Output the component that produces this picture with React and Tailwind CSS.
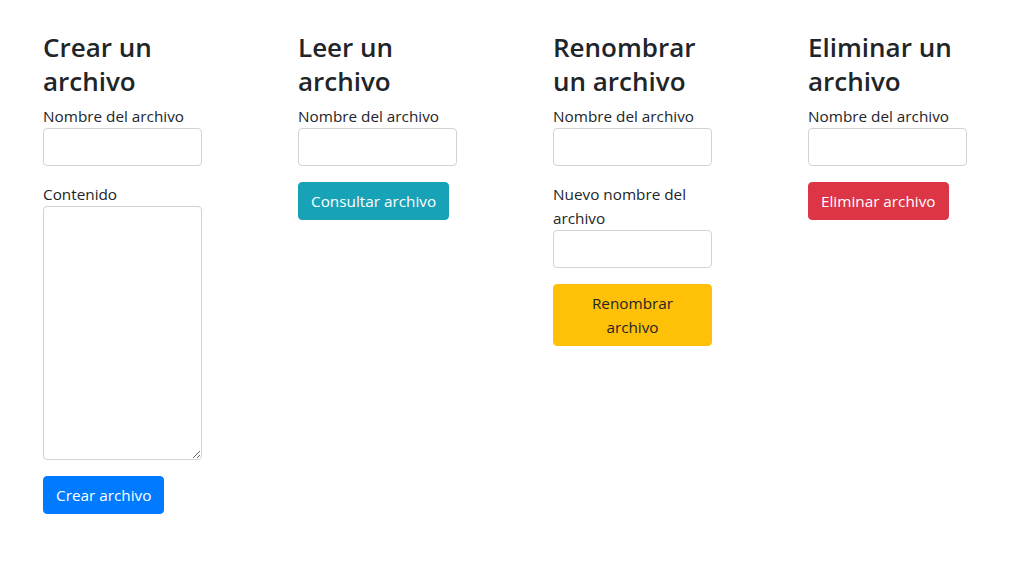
import React from "react";

const font = { fontFamily: '"Open Sans", "Noto Sans", sans-serif' };

const inputCls =
  "block w-full h-[38px] px-3 py-1.5 text-[15.3px] text-[#495057] bg-white border border-[#ced4da] rounded outline-none";
const labelCls = "block text-[15.3px] leading-6 text-[#212529]";
const headCls = "text-[26px] leading-[33.6px] font-semibold text-[#212529] pt-[2px] mb-[6px]";
const btnCls = "px-3 py-1.5 text-[15.3px] leading-6 rounded border";

function Field({ label, children }) {
  return (
    <div className="mb-4">
      <label className={labelCls}>{label}</label>
      {children}
    </div>
  );
}

export default function App() {
  return (
    <div className="bg-white min-h-[568px] pl-[43px] pt-[29px] flex" style={font}>
      {/* Crear */}
      <div className="w-[255px] shrink-0">
        <div className="w-[159px]">
          <h3 className={headCls}>Crear un archivo</h3>
          <Field label="Nombre del archivo">
            <input type="text" className={inputCls} />
          </Field>
          <Field label="Contenido">
            <textarea rows={10} className="block w-full h-[254px] px-3 py-1.5 text-base text-[#495057] bg-white border border-[#ced4da] rounded outline-none" />
          </Field>
          <button className={`${btnCls} text-white bg-[#007bff] border-[#007bff]`}>Crear archivo</button>
        </div>
      </div>

      {/* Leer */}
      <div className="w-[255px] shrink-0">
        <div className="w-[159px]">
          <h3 className={headCls}>Leer un archivo</h3>
          <Field label="Nombre del archivo">
            <input type="text" className={inputCls} />
          </Field>
          <button className={`${btnCls} text-white bg-[#17a2b8] border-[#17a2b8]`}>Consultar archivo</button>
        </div>
      </div>

      {/* Renombrar */}
      <div className="w-[255px] shrink-0">
        <div className="w-[159px]">
          <h3 className={headCls}>Renombrar un archivo</h3>
          <Field label="Nombre del archivo">
            <input type="text" className={inputCls} />
          </Field>
          <Field label="Nuevo nombre del archivo">
            <input type="text" className={inputCls} />
          </Field>
          <button className={`${btnCls} w-full text-[#212529] bg-[#ffc107] border-[#ffc107]`}>
            Renombrar archivo
          </button>
        </div>
      </div>

      {/* Eliminar */}
      <div className="w-[201px] shrink-0">
        <div className="w-[159px]">
          <h3 className={headCls}>Eliminar un archivo</h3>
          <Field label="Nombre del archivo">
            <input type="text" className={inputCls} />
          </Field>
          <button className={`${btnCls} text-white bg-[#dc3545] border-[#dc3545]`}>Eliminar archivo</button>
        </div>
      </div>
    </div>
  );
}
